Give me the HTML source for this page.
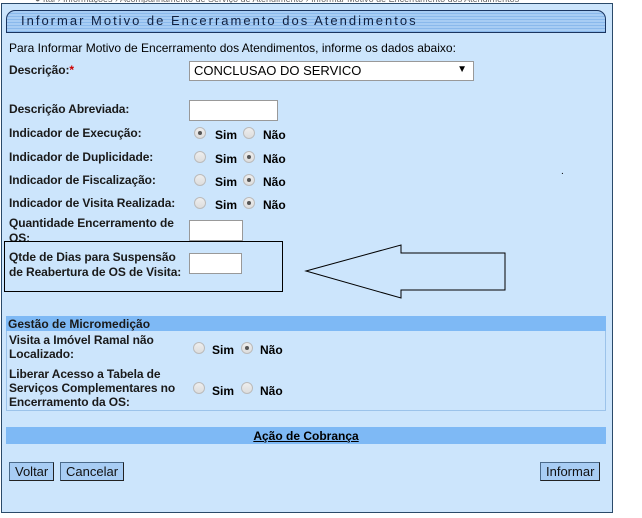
<!DOCTYPE html>
<html><head><meta charset="utf-8"><style>
*{margin:0;padding:0;box-sizing:border-box}
body{width:642px;height:518px;background:#fff;font-family:"Liberation Sans",Arial,sans-serif;position:relative;overflow:hidden;color:#000}
.a{position:absolute;white-space:nowrap}
.panel{position:absolute;left:1px;top:3px;width:612px;height:510px;background:#cce5fc;border:1px solid #2a4a6a}
.title{position:absolute;left:6px;top:10px;width:600px;height:23px;border:1px solid #1a3560;border-radius:9px 9px 0 0;background:repeating-linear-gradient(#a8cdf4 0,#a8cdf4 2px,#8ab9ec 2px,#8ab9ec 3px);font-size:13px;letter-spacing:2px;color:#102040;padding:2px 0 0 14px}
.lb{font-size:12px;font-weight:bold;color:#1a1a1a;letter-spacing:-0.1px}
.inp{position:absolute;background:#fff;border:1px solid #999}
.r{position:absolute;width:12px;height:12px;border-radius:50%;background:linear-gradient(#eee,#ddd);border:1px solid #bbb}
.r.on::after{content:"";position:absolute;left:3px;top:3px;width:4px;height:4px;border-radius:50%;background:#555}
.t{font-size:12px;font-weight:bold}
.btn{position:absolute;top:462px;height:19px;background:#a8cdf4;border:1px solid #4a6a8a;border-right-color:#222;border-bottom-color:#222;font-size:13px;padding:1px 5px;color:#111}
</style></head><body>
<div class="a" style="left:35px;top:-6px;font-size:9px;color:#666">● Ital › Informações › Acompanhamento de Serviço de Atendimento › Informar Motivo de Encerramento dos Atendimentos</div>
<div class="panel"></div>
<div class="title">Informar Motivo de Encerramento dos Atendimentos</div>
<div class="a" style="left:9px;top:41px;font-size:12px">Para Informar Motivo de Encerramento dos Atendimentos, informe os dados abaixo:</div>
<div class="a lb" style="left:9px;top:63px">Descrição:<span style="color:#c00">*</span></div>
<div class="inp" style="left:189px;top:61px;width:285px;height:20px;font-size:13px;padding:1px 4px">CONCLUSAO DO SERVICO<span style="position:absolute;right:6px;top:2px;font-size:10px">▼</span></div>
<div class="a lb" style="left:9px;top:102px">Descrição Abreviada:</div>
<div class="inp" style="left:189px;top:100px;width:89px;height:21px"></div>

<div class="a lb" style="left:9px;top:126px">Indicador de Execução:</div>
<div class="a lb" style="left:9px;top:150px">Indicador de Duplicidade:</div>
<div class="a lb" style="left:9px;top:173px">Indicador de Fiscalização:</div>
<div class="a lb" style="left:9px;top:196px">Indicador de Visita Realizada:</div>

<div class="r on" style="left:194px;top:127px"></div><div class="a t" style="left:215px;top:128px">Sim</div><div class="r" style="left:243px;top:127px"></div><div class="a t" style="left:263px;top:128px">Não</div>
<div class="r" style="left:194px;top:151px"></div><div class="a t" style="left:215px;top:152px">Sim</div><div class="r on" style="left:243px;top:151px"></div><div class="a t" style="left:263px;top:152px">Não</div>
<div class="r" style="left:194px;top:174px"></div><div class="a t" style="left:215px;top:175px">Sim</div><div class="r on" style="left:243px;top:174px"></div><div class="a t" style="left:263px;top:175px">Não</div>
<div class="r" style="left:194px;top:197px"></div><div class="a t" style="left:215px;top:198px">Sim</div><div class="r on" style="left:243px;top:197px"></div><div class="a t" style="left:263px;top:198px">Não</div>
<div class="a" style="left:561px;top:166px;font-size:10px">.</div>

<div class="a lb" style="left:9px;top:216px;line-height:15px">Quantidade Encerramento de<br>OS:</div>
<div class="inp" style="left:189px;top:220px;width:54px;height:21px"></div>
<div class="a" style="left:4px;top:241px;width:279px;height:51px;border:1px solid #000"></div>
<div class="a lb" style="left:9px;top:250px;line-height:15px">Qtde de Dias para Suspensão<br>de Reabertura de OS de Visita:</div>
<div class="inp" style="left:189px;top:253px;width:53px;height:21px"></div>
<svg class="a" style="left:0;top:0" width="642" height="518"><polygon points="306,271 401,245 401,253 505,253 505,290 401,290 401,298" fill="none" stroke="#000" stroke-width="1"/></svg>

<div class="a" style="left:6px;top:316px;width:600px;height:95px;border:1px solid #9cc3ea"></div>
<div class="a" style="left:6px;top:316px;width:600px;height:15px;background:#7eb9f5;font-size:12px;font-weight:bold;padding:1px 2px;color:#1a1a1a">Gestão de Micromedição</div>
<div class="a lb" style="left:9px;top:333px;line-height:14px">Visita a Imóvel Ramal não<br>Localizado:</div>
<div class="r" style="left:193px;top:342px"></div><div class="a t" style="left:212px;top:343px">Sim</div><div class="r on" style="left:241px;top:342px"></div><div class="a t" style="left:260px;top:343px">Não</div>
<div class="a lb" style="left:9px;top:367px;line-height:14px">Liberar Acesso a Tabela de<br>Serviços Complementares no<br>Encerramento da OS:</div>
<div class="r" style="left:193px;top:382px"></div><div class="a t" style="left:212px;top:384px">Sim</div><div class="r" style="left:241px;top:382px"></div><div class="a t" style="left:260px;top:384px">Não</div>

<div class="a" style="left:6px;top:427px;width:600px;height:17px;background:#7eb9f5;text-align:center;font-size:12px;font-weight:bold;text-decoration:underline;padding-top:2px">Ação de Cobrança</div>
<div class="btn" style="left:9px">Voltar</div>
<div class="btn" style="left:60px">Cancelar</div>
<div class="btn" style="left:540px">Informar</div>
</body></html>
